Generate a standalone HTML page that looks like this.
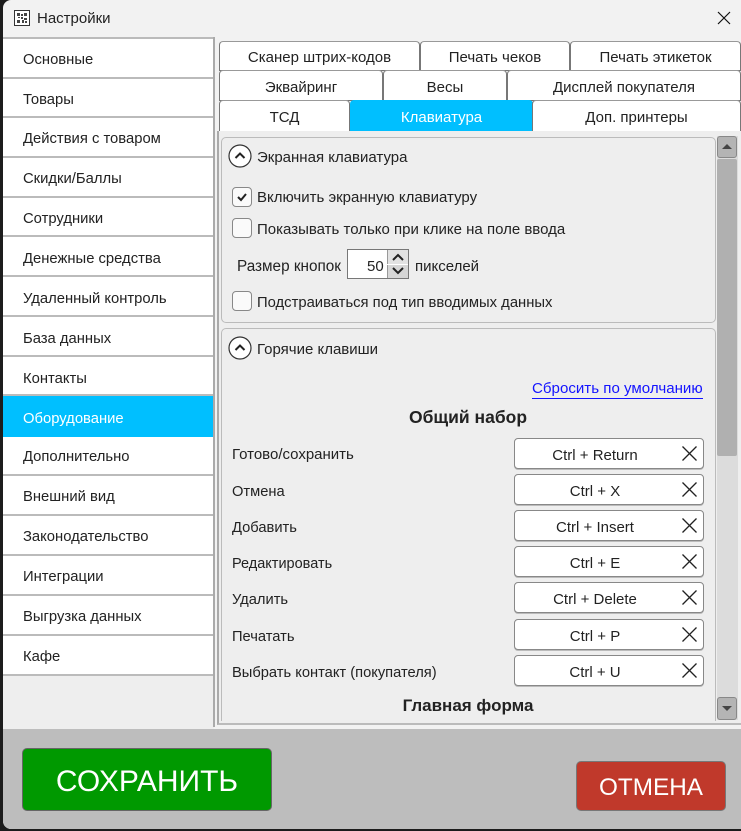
<!DOCTYPE html>
<html lang="ru"><head><meta charset="utf-8">
<style>
html,body{margin:0;padding:0;width:741px;height:831px;overflow:hidden;background:#1c1c1c}
body{position:relative;font-family:"Liberation Sans",sans-serif;font-size:15px;color:#222}
div,span,svg{position:absolute;box-sizing:border-box}
.t{white-space:nowrap;line-height:18px;margin-top:2px}
.s{font-size:14.8px}
.l{font-size:14.700px}
.c{text-align:center}
.side{left:3px;width:210px;background:#fff;border-bottom:2px solid #bbb}
.tab{background:#fff;border:1px solid #777;border-top-color:#999;border-bottom:1px solid #777;border-radius:4px 4px 0 0;text-align:center;white-space:nowrap}
.cb{left:232px;width:20px;height:20px;border:1px solid #888;border-radius:4px;background:#fafafa}
.key{left:514px;width:190px;height:31px;background:#fff;border:1px solid #888;border-radius:4px;box-shadow:0 1px 0 #bbb;text-align:center;line-height:33px;padding-right:28px;white-space:nowrap}
.key svg{right:5px;top:6px;width:17px;height:17px}
.group{left:221px;width:495px;background:#eee;border:1px solid #bbb;border-radius:5px}
</style></head><body>
<div style="left:3px;top:0;width:738px;height:829px;background:#f2f2f2;border-radius:8px 0 0 8px;overflow:hidden"></div>

<svg style="left:14px;top:10px" width="16" height="16" viewBox="0 0 16 16"><rect x=".5" y=".5" width="15" height="15" fill="#fff" stroke="#333"/><path d="M3 3h3v3H3zM10 3h3v3h-3zM3 10h3v3H3zM7 4h2v2H7zM7 7h2v2H7zM4 7h2v1H4zM10 8h3v2h-3zM8 10h2v3H8zM11 11h2v2h-2z" fill="#444"/></svg>
<div class="t" style="left:37px;top:8px;color:#222">Настройки</div>
<svg style="left:717px;top:11px" width="14" height="14" viewBox="0 0 14 14"><path d="M1 1l12 12M13 1L1 13" stroke="#111" stroke-width="1.2" fill="none"/></svg>

<!-- sidebar -->
<div style="left:3px;top:37px;width:211px;height:692px;background:#eee"></div>
<div style="left:3px;top:37px;width:210px;height:2px;background:#bbb"></div>
<div class="side" style="top:39px;height:40px"></div>
<div class="side" style="top:79px;height:39px"></div>
<div class="side" style="top:118px;height:40px"></div>
<div class="side" style="top:158px;height:40px"></div>
<div class="side" style="top:198px;height:39px"></div>
<div class="side" style="top:237px;height:40px"></div>
<div class="side" style="top:277px;height:40px"></div>
<div class="side" style="top:317px;height:40px"></div>
<div class="side" style="top:357px;height:39px"></div>
<div style="left:3px;top:396px;width:210px;height:41px;background:#00bfff"></div>
<div class="side" style="top:437px;height:39px"></div>
<div class="side" style="top:476px;height:40px"></div>
<div class="side" style="top:516px;height:40px"></div>
<div class="side" style="top:556px;height:40px"></div>
<div class="side" style="top:596px;height:40px"></div>
<div class="side" style="top:636px;height:40px"></div>
<div class="t s" style="left:23px;top:49px">Основные</div>
<div class="t s" style="left:23px;top:89px">Товары</div>
<div class="t s" style="left:23px;top:128px">Действия с товаром</div>
<div class="t s" style="left:23px;top:168px">Скидки/Баллы</div>
<div class="t s" style="left:23px;top:208px">Сотрудники</div>
<div class="t s" style="left:23px;top:248px">Денежные средства</div>
<div class="t s" style="left:23px;top:288px">Удаленный контроль</div>
<div class="t s" style="left:23px;top:328px">База данных</div>
<div class="t s" style="left:23px;top:368px">Контакты</div>
<div class="t s" style="left:23px;top:408px;color:#fff">Оборудование</div>
<div class="t s" style="left:23px;top:446px">Дополнительно</div>
<div class="t s" style="left:23px;top:486px">Внешний вид</div>
<div class="t s" style="left:23px;top:526px">Законодательство</div>
<div class="t s" style="left:23px;top:566px">Интеграции</div>
<div class="t s" style="left:23px;top:606px">Выгрузка данных</div>
<div class="t s" style="left:23px;top:646px">Кафе</div>
<div style="left:213px;top:37px;width:2px;height:690px;background:#aaa"></div>

<!-- tabs -->
<div class="tab" style="left:219px;top:41px;width:201px;height:30px;line-height:31px">Сканер штрих-кодов</div>
<div class="tab" style="left:420px;top:41px;width:150px;height:30px;line-height:31px">Печать чеков</div>
<div class="tab" style="left:570px;top:41px;width:171px;height:30px;line-height:31px">Печать этикеток</div>
<div class="tab" style="left:219px;top:70px;width:164px;height:31px;line-height:34px">Эквайринг</div>
<div class="tab" style="left:383px;top:70px;width:124px;height:31px;line-height:34px">Весы</div>
<div class="tab" style="left:507px;top:70px;width:234px;height:31px;line-height:34px">Дисплей покупателя</div>
<div class="tab" style="left:219px;top:100px;width:131px;height:32px;line-height:32px;padding-top:1px">ТСД</div>
<div class="tab" style="left:350px;top:100px;width:183px;height:32px;line-height:32px;padding-top:2px;background:#00bfff;color:#fff;border:0">Клавиатура</div>
<div class="tab" style="left:532px;top:100px;width:209px;height:32px;line-height:32px;padding-top:1px">Доп. принтеры</div>

<!-- content frame -->
<div style="left:217px;top:131px;width:524px;height:594px;background:#eee;border-left:2px solid #aaa;border-bottom:2px solid #bbb"></div>
<div class="group" style="top:137px;height:186px"></div>
<div class="group" style="top:328px;height:393px;border-bottom:0;border-radius:5px 5px 0 0"></div>
<svg style="left:228px;top:144px" width="24" height="24" viewBox="0 0 24 24"><circle cx="12" cy="12" r="11" fill="#fff" stroke="#333" stroke-width="1.2"/><path d="M7.500 14l4.500-4.500 4.500 4.500" fill="none" stroke="#222" stroke-width="2"/></svg>
<div class="t" style="left:257px;top:147px">Экранная клавиатура</div>
<div class="cb" style="top:187px"></div>
<svg style="left:236px;top:191px" width="12" height="12" viewBox="0 0 12 12"><path d="M2 6l3 3 5-6" fill="none" stroke="#222" stroke-width="2"/></svg>
<div class="t" style="left:257px;top:187px">Включить экранную клавиатуру</div>
<div class="cb" style="top:218px"></div>
<div class="t" style="left:257px;top:219px">Показывать только при клике на поле ввода</div>
<div class="t" style="left:237px;top:256px;font-size:15.300px">Размер кнопок</div>
<div style="left:347px;top:249px;width:62px;height:30px;background:#fff;border:1px solid #777"></div>
<div class="t" style="left:367px;top:256px;font-size:15px">50</div>
<div style="left:387px;top:250px;width:21px;height:14px;background:#e2e2e2;border-left:1px solid #999"></div>
<div style="left:387px;top:265px;width:21px;height:13px;background:#d6d6d6;border-left:1px solid #999"></div>
<svg style="left:391px;top:252px" width="14" height="24" viewBox="0 0 14 24"><path d="M2 8l5-5 5 5M2 16l5 5 5-5" fill="none" stroke="#222" stroke-width="2"/></svg>
<div class="t" style="left:415px;top:256px">пикселей</div>
<div class="cb" style="top:291px"></div>
<div class="t" style="left:257px;top:292px;font-size:14.800px">Подстраиваться под тип вводимых данных</div>

<svg style="left:228px;top:336px" width="24" height="24" viewBox="0 0 24 24"><circle cx="12" cy="12" r="11" fill="#fff" stroke="#333" stroke-width="1.2"/><path d="M7.500 14l4.500-4.500 4.500 4.500" fill="none" stroke="#222" stroke-width="2"/></svg>
<div class="t" style="left:257px;top:339px">Горячие клавиши</div>
<div class="t" style="left:532px;top:378px;color:#1414ff;border-bottom:1px solid #1414ff;height:19px;font-size:15.100px">Сбросить по умолчанию</div>
<div class="t c" style="left:222px;width:492px;top:406px;font-weight:bold;font-size:17.500px">Общий набор</div>

<div class="t" style="left:232px;top:444px">Готово/сохранить</div>
<div class="t l" style="left:232px;top:481px">Отмена</div>
<div class="t l" style="left:232px;top:517px">Добавить</div>
<div class="t" style="left:232px;top:553px;font-size:14.500px">Редактировать</div>
<div class="t l" style="left:232px;top:589px">Удалить</div>
<div class="t l" style="left:232px;top:626px">Печатать</div>
<div class="t l" style="left:232px;top:662px">Выбрать контакт (покупателя)</div>

<div class="key" style="top:438px">Ctrl + Return<svg viewBox="0 0 17 17"><path d="M1.500 1.500l14 14M15.500 1.500l-14 14" stroke="#222" stroke-width="1.3"/></svg></div>
<div class="key" style="top:474px">Ctrl + X<svg viewBox="0 0 17 17"><path d="M1.500 1.500l14 14M15.500 1.500l-14 14" stroke="#222" stroke-width="1.3"/></svg></div>
<div class="key" style="top:510px">Ctrl + Insert<svg viewBox="0 0 17 17"><path d="M1.500 1.500l14 14M15.500 1.500l-14 14" stroke="#222" stroke-width="1.3"/></svg></div>
<div class="key" style="top:546px">Ctrl + E<svg viewBox="0 0 17 17"><path d="M1.500 1.500l14 14M15.500 1.500l-14 14" stroke="#222" stroke-width="1.3"/></svg></div>
<div class="key" style="top:582px">Ctrl + Delete<svg viewBox="0 0 17 17"><path d="M1.500 1.500l14 14M15.500 1.500l-14 14" stroke="#222" stroke-width="1.3"/></svg></div>
<div class="key" style="top:619px">Ctrl + P<svg viewBox="0 0 17 17"><path d="M1.500 1.500l14 14M15.500 1.500l-14 14" stroke="#222" stroke-width="1.3"/></svg></div>
<div class="key" style="top:655px">Ctrl + U<svg viewBox="0 0 17 17"><path d="M1.500 1.500l14 14M15.500 1.500l-14 14" stroke="#222" stroke-width="1.3"/></svg></div>
<div class="t c" style="left:222px;width:492px;top:695px;font-weight:bold;font-size:17px">Главная форма</div>

<!-- scrollbar -->
<div style="left:717px;top:136px;width:21px;height:584px;background:#dcdcdc"></div>
<div style="left:717px;top:136px;width:20px;height:22px;background:#b4b4b4;border:1px solid #888;border-radius:3px"></div>
<svg style="left:722px;top:143px" width="10" height="7" viewBox="0 0 10 7"><path d="M0 6h10L5 1z" fill="#444"/></svg>
<div style="left:717px;top:159px;width:20px;height:297px;background:#b0b0b0;border-radius:2px"></div>
<div style="left:717px;top:697px;width:20px;height:23px;background:#b4b4b4;border:1px solid #888;border-radius:3px"></div>
<svg style="left:722px;top:705px" width="10" height="7" viewBox="0 0 10 7"><path d="M0 1h10L5 6z" fill="#444"/></svg>

<!-- footer -->
<div style="left:3px;top:729px;width:738px;height:100px;background:#bdbdbd;border-radius:0 0 0 8px"></div>
<div style="left:22px;top:748px;width:250px;height:63px;background:#009900;border:1px solid #666;border-radius:5px;color:#fff;font-size:30px;line-height:66px;text-align:center">СОХРАНИТЬ</div>
<div style="left:576px;top:761px;width:150px;height:50px;background:#c0392b;border:1px solid #777;border-radius:5px;color:#fff;font-size:24.300px;line-height:52px;text-align:center">ОТМЕНА</div>
</body></html>
